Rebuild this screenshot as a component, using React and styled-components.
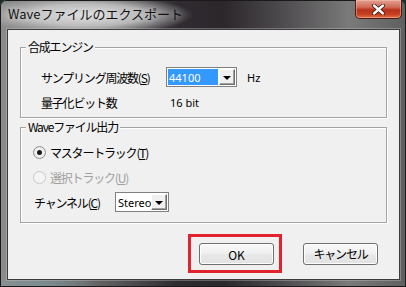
import React from 'react'
import styled, { createGlobalStyle, css } from 'styled-components'

const GlobalStyle = createGlobalStyle`
  html, body {
    margin: 0;
    padding: 0;
    background: #1d2a2b;
  }
  body {
    font-family: "Noto Sans CJK JP", "Noto Sans", sans-serif;
  }
`

const Window = styled.div`
  width: 406px;
  height: 287px;
  box-sizing: border-box;
  display: flex;
  flex-direction: column;
  padding: 0 6px 7px 7px;
  border-radius: 6px 6px 0 0;
  background:
    radial-gradient(ellipse 105px 20px at 88px 15px, rgba(228, 228, 228, 0.95) 0%, rgba(215, 215, 215, 0.75) 55%, rgba(200, 200, 200, 0) 100%),
    radial-gradient(ellipse 60px 12px at 40px 286px, rgba(120, 170, 180, 0.45), rgba(0, 0, 0, 0)),
    linear-gradient(90deg, #8c8c8c 0%, #6e6e6e 20%, #2f2b30 44%, #2b272b 55%, #4a474a 68%, #7a7a7a 86%, #5f5f5f 100%);
  box-shadow: inset 0 0 0 1px #1a1a1a;
`

const TitleBar = styled.div`
  height: 29px;
  flex: none;
  display: flex;
  align-items: flex-start;
  justify-content: space-between;
`

const Title = styled.div`
  margin: 6px 0 0 1px;
  font-size: 13px;
  line-height: 16px;
  color: #111;
  text-shadow: 0 0 6px rgba(255, 255, 255, 0.6);
`

const CloseButton = styled.div`
  width: 47px;
  height: 19px;
  margin-right: -2px;
  box-sizing: border-box;
  border: 1px solid #4a1c14;
  border-top: none;
  border-radius: 0 0 5px 5px;
  background: linear-gradient(180deg, #e3a294 0%, #cf6a55 40%, #b8321c 55%, #c9401f 80%, #e0704a 100%);
  box-shadow: inset 0 0 0 1px rgba(255, 200, 180, 0.45);
  display: flex;
  align-items: center;
  justify-content: center;
`

const Client = styled.div`
  flex: 1;
  display: flex;
  flex-direction: column;
  background: #f0f0f0;
  border: 1px solid #3c3c3c;
  box-shadow: 0 0 0 1px rgba(210, 210, 210, 0.35);
  padding-top: 10px;
`

const Group = styled.fieldset`
  margin: 0 12px ${p => p.$gap || 0}px 12px;
  padding: 0;
  min-width: 0;
  border: 1px solid #a4a4a4;
  box-shadow: inset 1px 1px 0 #fff, 1px 1px 0 #fff;
`

const Legend = styled.legend`
  margin-left: 5px;
  padding: 0 2px;
  font-size: 12px;
  line-height: 14px;
  letter-spacing: -1.2px;
  color: #000;
  background: #f0f0f0;
`

const GroupBody = styled.div`
  display: flex;
  flex-direction: column;
  gap: 5px;
  padding: ${p => p.$pad};
`

const Row = styled.div`
  display: flex;
  align-items: center;
  height: 20px;
`

const Label = styled.span`
  width: ${p => (p.$w ? `${p.$w}px` : 'auto')};
  padding-left: ${p => p.$pl || 0}px;
  flex: none;
  font-size: 12px;
  letter-spacing: -1.2px;
  color: ${p => (p.$disabled ? '#a0a0a0' : '#000')};
  white-space: nowrap;
  u {
    text-underline-offset: 1px;
  }
`

const Value = styled.span`
  font-size: 11px;
  color: #000;
  margin-left: ${p => p.$ml || 0}px;
  font-family: "Noto Sans", sans-serif;
`

const Combo = styled.div`
  width: ${p => p.$w}px;
  height: 20px;
  box-sizing: border-box;
  border: 1px solid #7f8080;
  background: #fff;
  display: flex;
  align-items: stretch;
  padding: 1px;
`

const ComboText = styled.div`
  flex: 1;
  display: flex;
  align-items: center;
  padding-left: 1px;
  font-family: "Noto Sans", sans-serif;
  font-size: 11px;
  overflow: hidden;
  ${p =>
    p.$selected
      ? css`
          background: #3399ff;
          color: #fff;
          margin-right: 1px;
        `
      : css`
          color: #000;
        `}
`

const DropButton = styled.div`
  width: 16px;
  flex: none;
  box-sizing: border-box;
  background: #f0f0f0;
  border-top: 1px solid #fff;
  border-left: 1px solid #fff;
  border-right: 1px solid #6e6e6e;
  border-bottom: 1px solid #6e6e6e;
  box-shadow: inset -1px -1px 0 #a0a0a0;
  display: flex;
  align-items: center;
  justify-content: center;
`

const Arrow = styled.div`
  width: 0;
  height: 0;
  border-left: 4px solid transparent;
  border-right: 4px solid transparent;
  border-top: 4px solid #000;
  margin-top: 1px;
`

const Radio = styled.span`
  width: 13px;
  height: 13px;
  flex: none;
  box-sizing: border-box;
  border-radius: 50%;
  border: 1px solid ${p => (p.$disabled ? '#c8c8c8' : '#8e8f8f')};
  background: ${p =>
    p.$disabled
      ? '#f4f4f4'
      : 'radial-gradient(circle at 50% 50%, #ffffff 0%, #e8e8e8 70%, #f8f8f8 100%)'};
  margin-right: 4px;
  display: flex;
  align-items: center;
  justify-content: center;
  &::after {
    content: '';
    width: 5px;
    height: 5px;
    border-radius: 50%;
    background: ${p => (p.$checked ? '#1a1a1a' : 'transparent')};
  }
`

const ButtonBar = styled.div`
  display: flex;
  justify-content: flex-end;
  align-items: center;
  gap: 21px;
  margin-top: 11px;
  padding-right: 21px;
`

const Highlight = styled.div`
  border: 3px solid #e2222e;
  padding: 6px 5px 5px 8px;
`

const Button = styled.div`
  width: 75px;
  height: 22px;
  box-sizing: border-box;
  border: 1px solid #707070;
  border-radius: 3px;
  background: linear-gradient(180deg, #f8f8f8 0%, #f0f0f0 48%, #e8e8e8 52%, #e2e2e2 100%);
  box-shadow: inset 0 0 0 1px #fdfdfd;
  display: flex;
  align-items: center;
  justify-content: center;
  font-size: 12px;
  letter-spacing: ${p => (p.$tight ? '-1.2px' : '0')};
  color: #000;
`

const App = () => {
  return (
    <>
      <GlobalStyle />
      <Window>
        <TitleBar>
          <Title>Waveファイルのエクスポート</Title>
          <CloseButton>
            <svg width="13" height="11" viewBox="0 0 13 11">
              <path
                d="M2 1.5 L11 9.5 M11 1.5 L2 9.5"
                stroke="#3a1008"
                strokeWidth="4"
                strokeLinecap="round"
              />
              <path
                d="M2 1.5 L11 9.5 M11 1.5 L2 9.5"
                stroke="#ffffff"
                strokeWidth="2.4"
                strokeLinecap="round"
              />
            </svg>
          </CloseButton>
        </TitleBar>
        <Client>
          <Group $gap={2}>
            <Legend>合成エンジン</Legend>
            <GroupBody $pad="13px 0 5px 20px">
              <Row>
                <Label $w={125}>
                  サンプリング周波数(<u>S</u>)
                </Label>
                <Combo $w={71}>
                  <ComboText $selected>44100</ComboText>
                  <DropButton>
                    <Arrow />
                  </DropButton>
                </Combo>
                <Value $ml={10}>Hz</Value>
              </Row>
              <Row>
                <Label $w={129}>量子化ビット数</Label>
                <Value>16 bit</Value>
              </Row>
            </GroupBody>
          </Group>
          <Group>
            <Legend>Waveファイル出力</Legend>
            <GroupBody $pad="8px 0 10px 12px">
              <Row>
                <Radio $checked />
                <Label>
                  マスタートラック(<u>T</u>)
                </Label>
              </Row>
              <Row>
                <Radio $disabled />
                <Label $disabled>
                  選択トラック(<u>U</u>)
                </Label>
              </Row>
              <Row>
                <Label $w={81} $pl={1}>
                  チャンネル(<u>C</u>)
                </Label>
                <Combo $w={54}>
                  <ComboText>Stereo</ComboText>
                  <DropButton>
                    <Arrow />
                  </DropButton>
                </Combo>
              </Row>
            </GroupBody>
          </Group>
          <ButtonBar>
            <Highlight>
              <Button>OK</Button>
            </Highlight>
            <Button $tight>キャンセル</Button>
          </ButtonBar>
        </Client>
      </Window>
    </>
  )
}

export default App
